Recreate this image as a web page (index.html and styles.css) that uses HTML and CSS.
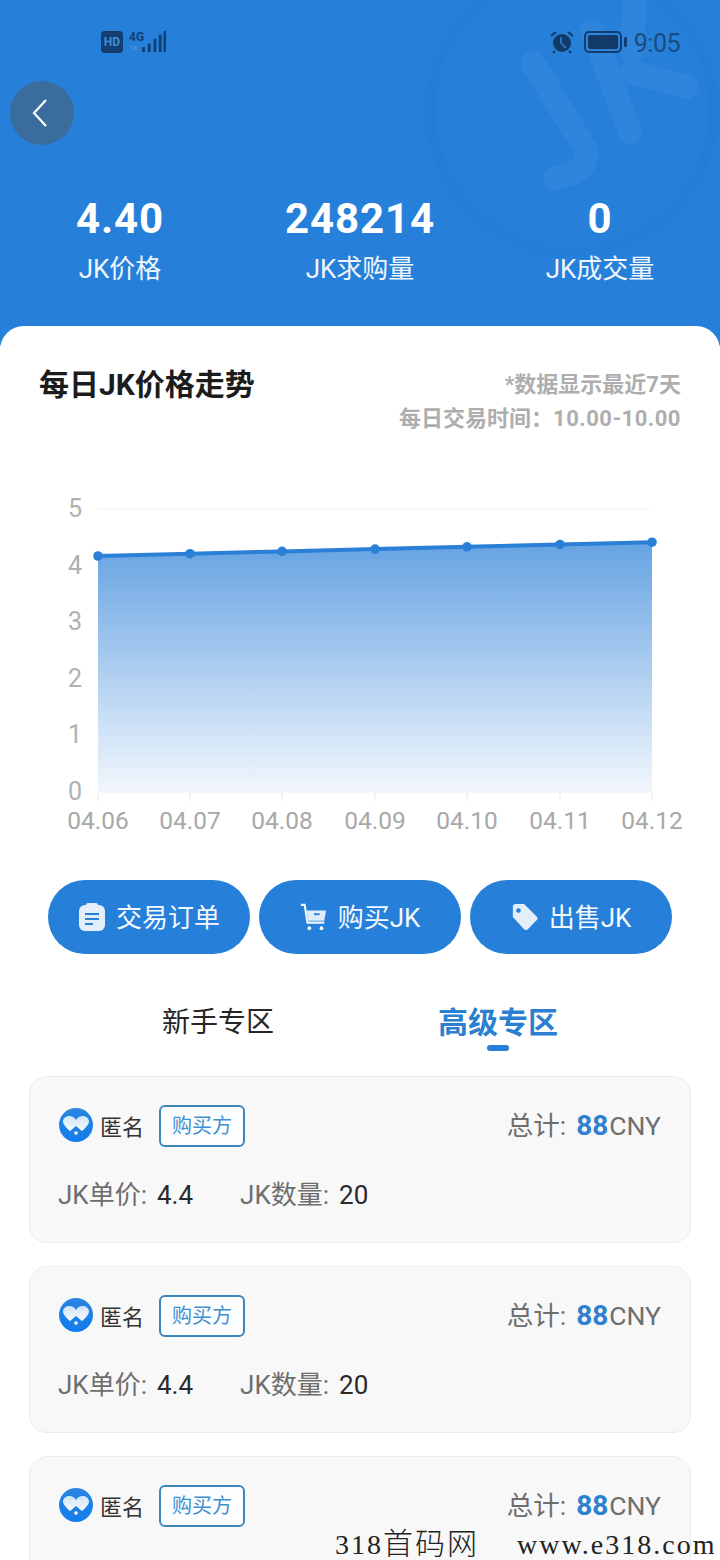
FILE: index.html
```html
<!DOCTYPE html>
<html lang="zh">
<head>
<meta charset="utf-8">
<title>JK</title>
<link rel="stylesheet" href="styles.css">
</head>
<body>
<div class="page">
  <header class="hero">
    <svg class="mark" viewBox="0 0 300 340" aria-hidden="true">
      <circle cx="152" cy="110" r="142" fill="#fff" fill-opacity=".005" stroke="#0b4f9a" stroke-opacity=".035" stroke-width="10"/>
      <path d="M113 63 L165 148 Q172 172 135 178" fill="none" stroke="#fff" stroke-opacity=".045" stroke-width="24" stroke-linecap="round" stroke-linejoin="round"/>
      <path d="M215 -10 L212 50 M172 30 L210 132 M212 72 L266 87" fill="none" stroke="#fff" stroke-opacity=".045" stroke-width="24" stroke-linecap="round" stroke-linejoin="round"/>
    </svg>
    <div class="status">
      <div class="status-left">
        <span class="hd">HD</span>
        <span class="net"><b>4G</b><i>1k</i></span>
        <svg class="signal" viewBox="0 0 26 24"><path d="M1 18h3v5H1zM7 14h3v9H7zM13 9h3v14h-3zM18.500 5h3v18h-3zM23.500 1h2.500v22h-2.500z" fill="#103f72"/></svg>
      </div>
      <div class="status-right">
        <svg class="alarm" viewBox="0 0 26 24"><circle cx="13" cy="13" r="9" fill="#123a66"/><path d="M2 6l5-4M24 6l-5-4M6 21l-2 2M20 21l2 2" stroke="#123a66" stroke-width="2.200" fill="none"/><path d="M12 7v6l5 5" stroke="#2a80d8" stroke-width="1.600" fill="none"/></svg>
        <svg class="battery" viewBox="0 0 43 22"><rect x="1" y="1" width="36" height="20" rx="4" fill="none" stroke="#123f70" stroke-width="2"/><rect x="4" y="4" width="30" height="14" rx="2" fill="#123a66"/><rect x="40" y="6" width="3" height="10" rx="1" fill="#123f70"/></svg>
        <span class="time">9:05</span>
      </div>
    </div>
    <button class="back" type="button" aria-label="返回">
      <svg viewBox="0 0 20 32"><path d="M16 3 L4 16 L16 29" fill="none" stroke="#fff" stroke-width="2.200"/></svg>
    </button>
    <div class="stats">
      <div class="stat"><strong>4.40</strong><span>JK价格</span></div>
      <div class="stat"><strong>248214</strong><span>JK求购量</span></div>
      <div class="stat"><strong>0</strong><span>JK成交量</span></div>
    </div>
  </header>

  <main class="sheet">
    <section class="trend-head">
      <h1>每日JK价格走势</h1>
      <div class="notes">
        <p>*数据显示最近7天</p>
        <p>每日交易时间：<span class="hours">10.00-10.00</span></p>
      </div>
    </section>

    <svg class="chart" viewBox="0 0 720 370" aria-label="每日JK价格走势图">
      <defs>
        <linearGradient id="fill" x1="0" y1="0" x2="0" y2="1">
          <stop offset="0" stop-color="#2a7fd7" stop-opacity=".72"/>
          <stop offset="1" stop-color="#2a7fd7" stop-opacity=".06"/>
        </linearGradient>
      </defs>
      <line class="grid" x1="98" x2="652" y1="32" y2="32"/>
      <path d="M98 79 L190 76.700 L282 74.400 L375 72.100 L467 69.800 L560 67.500 L652 65.200 V316 H98 Z" fill="url(#fill)"/>
      <path class="axis" d="M98 316v8M190 316v8M282 316v8M375 316v8M467 316v8M560 316v8M652 316v8"/>
      <path class="line" d="M98 79 L190 76.700 L282 74.400 L375 72.100 L467 69.800 L560 67.500 L652 65.200"/>
      <g class="dots">
        <circle cx="98" cy="79" r="4.800"/><circle cx="190" cy="76.700" r="4.800"/><circle cx="282" cy="74.400" r="4.800"/><circle cx="375" cy="72.100" r="4.800"/><circle cx="467" cy="69.800" r="4.800"/><circle cx="560" cy="67.500" r="4.800"/><circle cx="652" cy="65.200" r="4.800"/>
      </g>
      <g class="ylab">
        <text x="75" y="40">5</text><text x="75" y="97">4</text><text x="75" y="153">3</text><text x="75" y="210">2</text><text x="75" y="266">1</text><text x="75" y="323">0</text>
      </g>
      <g class="xlab">
        <text x="98" y="352">04.06</text><text x="190" y="352">04.07</text><text x="282" y="352">04.08</text><text x="375" y="352">04.09</text><text x="467" y="352">04.10</text><text x="560" y="352">04.11</text><text x="652" y="352">04.12</text>
      </g>
    </svg>

    <nav class="actions">
      <a class="action">
        <svg viewBox="0 0 28 30"><rect x="1" y="3" width="26" height="26" rx="6" fill="#e3eefa"/><rect x="8" y="1" width="12" height="5" rx="2" fill="#e3eefa"/><path d="M7 12h14M7 17h14M7 22h8" stroke="#2a7fd7" stroke-width="2.200"/></svg>
        <span>交易订单</span>
      </a>
      <a class="action">
        <svg viewBox="0 0 30 30"><path d="M1 2h4l3 19h18" fill="none" stroke="#f0f6fd" stroke-width="2.200"/><path d="M7 8h21l-2 11H9z" fill="#dfecf9"/><path d="M15 12h6" stroke="#2a7fd7" stroke-width="2"/><circle cx="10" cy="27" r="2" fill="#fff"/><circle cx="23" cy="27" r="2" fill="#fff"/></svg>
        <span>购买JK</span>
      </a>
      <a class="action">
        <svg viewBox="0 0 30 30"><path d="M2 4 Q2 1 5 1 H14 L28 15 Q29 17 28 18 L18 28 Q16 30 14 28 L2 15 Z" fill="#e3eefa"/><circle cx="8" cy="8" r="2.500" fill="#2a7fd7"/></svg>
        <span>出售JK</span>
      </a>
    </nav>

    <div class="tabs">
      <div class="tab">新手专区</div>
      <div class="tab active">高级专区</div>
    </div>

    <ul class="orders">
      <li class="order">
        <div class="row">
          <div class="who">
            <svg class="avatar" viewBox="0 0 34 34"><use href="#ava"/></svg>
            <span class="name">匿名</span><span class="tag">购买方</span>
          </div>
          <div class="total"><span class="k">总计:</span><b>88</b><span class="k">CNY</span></div>
        </div>
        <div class="row2"><span class="k">JK单价:</span><span class="v">4.4</span><span class="k gap">JK数量:</span><span class="v">20</span></div>
      </li>
      <li class="order">
        <div class="row">
          <div class="who">
            <svg class="avatar" viewBox="0 0 34 34"><use href="#ava"/></svg>
            <span class="name">匿名</span><span class="tag">购买方</span>
          </div>
          <div class="total"><span class="k">总计:</span><b>88</b><span class="k">CNY</span></div>
        </div>
        <div class="row2"><span class="k">JK单价:</span><span class="v">4.4</span><span class="k gap">JK数量:</span><span class="v">20</span></div>
      </li>
      <li class="order">
        <div class="row">
          <div class="who">
            <svg class="avatar" viewBox="0 0 34 34"><use href="#ava"/></svg>
            <span class="name">匿名</span><span class="tag">购买方</span>
          </div>
          <div class="total"><span class="k">总计:</span><b>88</b><span class="k">CNY</span></div>
        </div>
      </li>
    </ul>
  </main>

  <div class="stamp"><span>318<span class="stamp-cn">首码网</span></span><span>www.e318.com</span></div>

  <svg class="defs" width="0" height="0" aria-hidden="true">
    <defs>
      <linearGradient id="ab" x1="0" y1="0" x2="0" y2="1"><stop offset="0" stop-color="#2b86e0"/><stop offset="1" stop-color="#0f7cf0"/></linearGradient>
      <linearGradient id="ah" x1="0" y1="0" x2="0" y2="1"><stop offset="0" stop-color="#cfe5f6"/><stop offset="1" stop-color="#fff"/></linearGradient>
      <g id="ava">
        <circle cx="17" cy="17" r="17" fill="url(#ab)"/>
        <path d="M17 12 C14 6 5 7 4 13 C3.500 17 10 22 14 26 H20 C24 22 30.500 17 30 13 C29 7 20 6 17 12Z" fill="url(#ah)"/>
        <path d="M17 18l7 6v5H10v-5z" fill="#1b7fe6"/><circle cx="17" cy="25" r="1.800" fill="#fff"/>
      </g>
    </defs>
  </svg>
</div>
</body>
</html>
```

FILE: styles.css
```css
* { box-sizing: border-box; }
html, body { margin: 0; padding: 0; }
body { font-family: Roboto, "Noto Sans CJK SC", sans-serif; background: #fff; }
.page { position: relative; width: 720px; height: 1560px; overflow: hidden; background: #fff; }

.hero { position: relative; height: 346px; background: #2680da; color: #fff; overflow: hidden; }
.mark { position: absolute; left: 420px; top: 0; width: 300px; height: 340px; }

.status { position: relative; display: flex; justify-content: space-between; align-items: center; height: 81px; padding: 2px 40px 0 101px; }
.status-left, .status-right { display: flex; align-items: center; }
.hd { width: 22px; height: 22px; border-radius: 4px; background: #123f70; color: #3f8ed8; font-size: 12px; font-weight: 700; line-height: 22px; text-align: center; }
.net { display: flex; flex-direction: column; margin-left: 6px; width: 14px; line-height: 1; }
.net b { font-size: 12px; color: #123f70; }
.net i { font-size: 8px; font-style: normal; color: #5a9bd6; margin-top: 1px; }
.signal { width: 25px; height: 23px; margin-left: -2px; }
.alarm { width: 26px; height: 24px; }
.battery { width: 43px; height: 22px; margin-left: 9px; }
.time { margin: 3px 0 0 7px; font-size: 25px; color: #1a4c80; font-weight: 400; letter-spacing: -.5px; }

.back { position: relative; display: block; width: 64px; height: 64px; margin-left: 10px; padding: 0; border: 0; border-radius: 50%; background: #3a6c9d; }
.back svg { display: block; width: 20px; height: 32px; margin-left: 20px; }

.stats { position: relative; display: grid; grid-template-columns: 240px 240px 240px; margin-top: 50px; text-align: center; }
.stat strong { display: block; font-size: 42px; line-height: 48px; font-weight: 700; letter-spacing: .9px; }
.stat span { display: block; margin-top: 8px; font-size: 26px; line-height: 36px; color: #f0f6fd; }

.sheet { position: relative; margin-top: -20px; border-radius: 24px 24px 0 0; background: #fff; padding-top: 36px; }
.trend-head { display: flex; justify-content: space-between; height: 74px; padding: 0 39px; }
.trend-head h1 { margin: 3px 0 0; font-size: 30px; line-height: 40px; font-weight: 700; color: #1c1c1c; }
.notes { padding-top: 8px; text-align: right; font-size: 22px; font-weight: 700; color: #aeaeae; line-height: 30px; }
.notes p { margin: 0 0 4px; }
.hours { letter-spacing: .5px; }

.chart { display: block; width: 720px; height: 370px; margin-top: 41px; }
.grid { stroke: #f1f1f1; stroke-width: 1; }
.axis { stroke: #e8e8e8; stroke-width: 1; fill: none; }
.line { fill: none; stroke: #2a7fd7; stroke-width: 4; }
.dots circle { fill: #2a7fd7; }
.ylab text { font-size: 25px; fill: #b0b0b0; text-anchor: middle; }
.xlab text { font-size: 24.5px; fill: #a8a8a8; text-anchor: middle; }

.actions { display: flex; justify-content: center; gap: 9px; margin-top: 33px; }
.action { display: flex; align-items: center; justify-content: center; gap: 10px; width: 202px; height: 74px; border-radius: 37px; background: #2680da; color: #f4f9fe; font-size: 26px; }
.action svg { width: 28px; height: 30px; }
.action span { margin-bottom: 3px; }

.tabs { display: grid; grid-template-columns: 1fr 1fr; width: 560px; margin: 47px auto 0; text-align: center; }
.tab { position: relative; font-size: 28px; line-height: 44px; height: 60px; color: #262626; }
.tab:first-child { margin-left: -4px; }
.tab.active { margin-right: 4px; color: #2a7fd0; font-weight: 700; font-size: 30px; }
.tab.active::after { content: ""; position: absolute; left: 50%; bottom: 10px; width: 22px; height: 6px; margin-left: -11px; border-radius: 3px; background: #2680da; }

.orders { list-style: none; margin: 15px 0 0; padding: 0 29px; display: flex; flex-direction: column; gap: 23px; }
.order { height: 167px; padding: 26px 29px 0; background: #f8f8f9; border: 1px solid #ececec; border-radius: 18px; }
.row { display: flex; justify-content: space-between; align-items: center; height: 44px; }
.who { display: flex; align-items: center; }
.avatar { width: 34px; height: 34px; flex: none; }
.name { margin-left: 7px; font-size: 22px; color: #333; }
.tag { display: block; margin: 2px 0 0 15px; width: 86px; height: 42px; border: 2px solid #3e86ba; border-radius: 6px; background: #fbfdff; color: #3f8fd0; font-size: 20px; line-height: 39px; text-align: center; }
.total { display: flex; align-items: baseline; margin-bottom: 3px; font-size: 26.5px; }
.k { color: #6e6e6e; }
.total b { margin: 0 1px 0 10px; color: #2f80cf; font-size: 28px; font-weight: 700; }
.row2 { display: flex; align-items: baseline; margin: 27px 0 0 -1px; font-size: 26px; }
.v { margin-left: 10px; color: #2a2a2a; }
.gap { margin-left: 47px; }

.stamp { position: absolute; left: 335px; bottom: 0; display: flex; gap: 38px; align-items: baseline; height: 32px; font-family: "Liberation Serif", "Noto Sans CJK SC", serif; font-size: 28px; line-height: 32px; letter-spacing: 2px; color: #222; white-space: nowrap; }
.stamp-cn { font-size: 30px; font-weight: 300; }
.defs { position: absolute; }
```
